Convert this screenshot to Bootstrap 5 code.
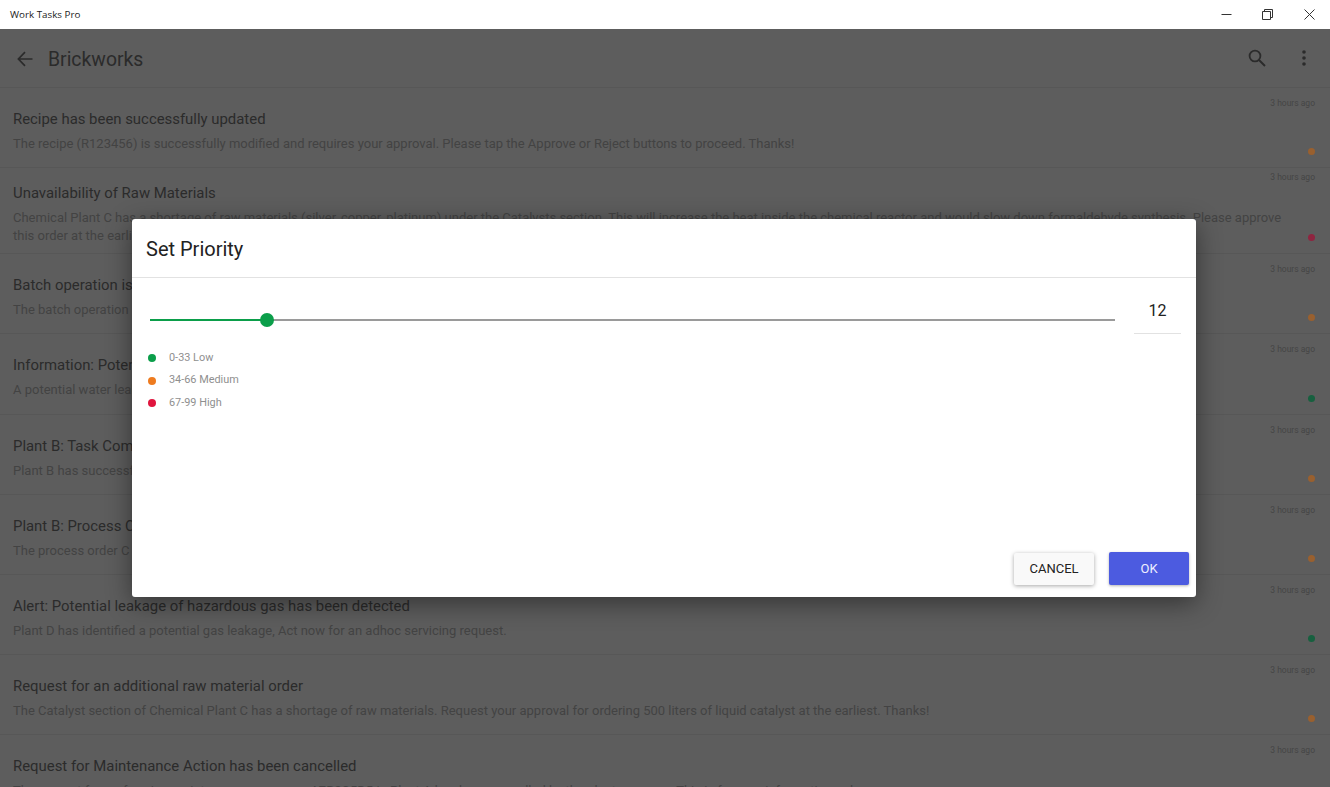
<!DOCTYPE html>
<html lang="en">
<head>
  <meta charset="UTF-8" />
  <title>Work Tasks Pro</title>
  <link href="https://cdn.jsdelivr.net/npm/bootstrap@5.3.0/dist/css/bootstrap.min.css" rel="stylesheet">
  <style>
    html, body { height: 100%; }
    body { overflow: hidden; background: #5d5d5d; font-family: Roboto, sans-serif; position: relative; }

    /* window title bar */
    .win-bar { height: 29px; background: #fff; }
    .win-name { font-family: "Open Sans", sans-serif; font-size: 9.8px; color: #1a1a1a; padding: 1px 0 0 10px; }
    .win-btn { width: 41.5px; display: flex; justify-content: center; }

    /* dimmed screen behind the dialog */
    .app-head { height: 59px; padding: 0 23px 0 17px; border-bottom: 1px solid #575757; }
    .head-arrow { margin-top: 2px; }
    .head-more { margin-left: 35px; }
    .app-title { font-size: 19.4px; color: #2b2b2b; margin-left: 15px; padding-top: 3px; }
    .task-row { height: 80.2px; padding: 9px 15px 0 13px; border-bottom: 1px solid #575757; }
    .task-row.two-lines { height: 86px; padding-top: 3px; }
    .task-main { padding-top: 12px; min-width: 0; flex: 1; }
    .task-name { font-size: 14.9px; color: #2b2b2b; line-height: 20px; margin-bottom: 6px; }
    .task-text { font-size: 13px; color: #434343; line-height: 17.5px; margin: 0; }
    .task-side { width: 30px; padding-bottom: 12px; }
    .task-time { font-size: 8.5px; line-height: 12px; color: #454545; white-space: nowrap; }
    .task-dot { width: 7px; height: 7px; border-radius: 50%; }
    .dot-orange { background: #99602f; }
    .dot-red { background: #8f2540; }
    .dot-green { background: #17603f; }

    /* dialog */
    .dialog-layer { position: absolute; inset: 29px 0 0 0; padding: 190px 134px 0 132px; }
    .priority-dialog { height: 378px; background: #fff; border-radius: 3px; box-shadow: 0 6px 26px rgba(0,0,0,.45); }
    .dialog-head { height: 59px; padding: 2px 0 0 14px; border-bottom: 1px solid #e2e2e2; }
    .dialog-title { font-size: 20px; color: #222; }
    .dialog-body { padding: 13px 15px 0 18px; }
    .slider-box { width: 965px; height: 2px; background: #9a9a9a; position: relative; margin-top: 28px; }
    .slider-fill { height: 2px; background: #0b9e4a; }
    .slider-thumb { position: absolute; top: -6px; width: 14px; height: 14px; margin-left: -7px; border-radius: 50%; background: #0b9e4a; }
    .value-box { width: 47px; height: 43px; border-bottom: 1px solid #e2e2e2; font-size: 16px; color: #222; text-align: center; line-height: 40px; }
    .legend-list { padding: 13px 0 0 16px; margin: 0; list-style: none; font-size: 10.9px; color: #8f8f8f; }
    .legend-list li { height: 22.4px; }
    .legend-dot { width: 8px; height: 8px; border-radius: 50%; margin-right: 13px; }
    .legend-low { background: #0b9e4a; }
    .legend-mid { background: #ee7b1f; }
    .legend-high { background: #e0163e; }
    .dialog-foot { padding: 0 7px 12px 0; gap: 15px; }
    .act-btn { border: 0; border-radius: 2px; font-size: 13px; padding: 0; font-family: Roboto, sans-serif; }
    .act-cancel { width: 80px; height: 32px; background: #f9f9f9; color: #222; box-shadow: 0 1px 4px rgba(0,0,0,.35); }
    .act-ok { width: 80px; height: 33px; background: #4c5be0; color: #eef; box-shadow: 0 1px 3px rgba(0,0,0,.3); }
    .act-cancel:hover { background: #f9f9f9; color: #222; }
    .act-ok:hover { background: #4c5be0; color: #eef; }
  </style>
</head>
<body>
  <!-- title bar -->
  <div class="win-bar d-flex align-items-center">
    <span class="win-name flex-grow-1">Work Tasks Pro</span>
    <div class="d-flex">
      <span class="win-btn"><svg width="11" height="11" viewBox="0 0 11 11"><path d="M0.5 5.5h10" stroke="#333" fill="none"/></svg></span>
      <span class="win-btn"><svg width="11" height="11" viewBox="0 0 11 11"><path d="M0.5 2.5h8v8h-8zM2.5 2.5v-2h8v8h-2" stroke="#333" fill="none"/></svg></span>
      <span class="win-btn"><svg width="11" height="11" viewBox="0 0 11 11"><path d="M0.5 0.5l10 10M10.5 0.5l-10 10" stroke="#333" fill="none"/></svg></span>
    </div>
  </div>

  <!-- dimmed list -->
  <div class="app-head d-flex align-items-center">
    <svg class="head-arrow" width="16" height="16" viewBox="0 0 16 16"><path d="M15.5 8H1.6M8 1.2L1.4 8 8 14.8" stroke="#2b2b2b" stroke-width="1.7" fill="none"/></svg>
    <span class="app-title flex-grow-1">Brickworks</span>
    <svg width="18" height="18" viewBox="0 0 18 18"><circle cx="7" cy="7" r="5.4" stroke="#2b2b2b" stroke-width="1.8" fill="none"/><path d="M11 11l6 6" stroke="#2b2b2b" stroke-width="2" fill="none"/></svg>
    <svg class="head-more" width="6" height="16" viewBox="0 0 6 16"><circle cx="3" cy="2" r="1.8" fill="#2b2b2b"/><circle cx="3" cy="8" r="1.8" fill="#2b2b2b"/><circle cx="3" cy="14" r="1.8" fill="#2b2b2b"/></svg>
  </div>
  <div id="taskList"></div>

  <!-- priority dialog -->
  <div class="dialog-layer">
    <div class="priority-dialog d-flex flex-column">
      <div class="dialog-head d-flex align-items-center"><span class="dialog-title">Set Priority</span></div>
      <div class="dialog-body d-flex justify-content-between align-items-start">
        <div class="slider-box">
          <div class="slider-fill" style="width:12.12%"></div>
          <div class="slider-thumb" style="left:12.12%"></div>
        </div>
        <div class="value-box">12</div>
      </div>
      <ul class="legend-list">
        <li class="d-flex align-items-center"><span class="legend-dot legend-low"></span>0-33 Low</li>
        <li class="d-flex align-items-center"><span class="legend-dot legend-mid"></span>34-66 Medium</li>
        <li class="d-flex align-items-center"><span class="legend-dot legend-high"></span>67-99 High</li>
      </ul>
      <div class="dialog-foot d-flex justify-content-end align-items-end mt-auto">
        <button type="button" class="btn act-btn act-cancel">CANCEL</button>
        <button type="button" class="btn act-btn act-ok">OK</button>
      </div>
    </div>
  </div>

  <script>
    const tasks = [
      ['Recipe has been successfully updated', 'The recipe (R123456) is successfully modified and requires your approval. Please tap the Approve or Reject buttons to proceed. Thanks!', 'orange'],
      ['Unavailability of Raw Materials', 'Chemical Plant C has a shortage of raw materials (silver, copper, platinum) under the Catalysts section. This will increase the heat inside the chemical reactor and would slow down formaldehyde synthesis. Please approve this order at the earliest.', 'red', true],
      ['Batch operation is complete', 'The batch operation has been completed successfully.', 'orange'],
      ['Information: Potential water leakage', 'A potential water leakage has been reported.', 'green'],
      ['Plant B: Task Completed', 'Plant B has successfully completed the task.', 'orange'],
      ['Plant B: Process Completed', 'The process order C has been completed.', 'orange'],
      ['Alert: Potential leakage of hazardous gas has been detected', 'Plant D has identified a potential gas leakage, Act now for an adhoc servicing request.', 'green'],
      ['Request for an additional raw material order', 'The Catalyst section of Chemical Plant C has a shortage of raw materials. Request your approval for ordering 500 liters of liquid catalyst at the earliest. Thanks!', 'orange'],
      ['Request for Maintenance Action has been cancelled', 'The request for performing maintenance on sensor A7B2C5D5 in Plant A has been cancelled by the plant manager. This is for your information only.', 'orange']
    ];
    const taskList = document.getElementById('taskList');
    tasks.forEach(t => {
      const row = document.createElement('div');
      row.className = 'task-row d-flex' + (t[3] ? ' two-lines' : '');
      row.innerHTML = `
        <div class="task-main">
          <div class="task-name">${t[0]}</div>
          <p class="task-text">${t[1]}</p>
        </div>
        <div class="task-side d-flex flex-column justify-content-between align-items-end">
          <span class="task-time">3 hours ago</span>
          <span class="task-dot dot-${t[2]}"></span>
        </div>`;
      taskList.appendChild(row);
    });
  </script>
  <script src="https://cdn.jsdelivr.net/npm/bootstrap@5.3.0/dist/js/bootstrap.bundle.min.js"></script>
</body>
</html>
